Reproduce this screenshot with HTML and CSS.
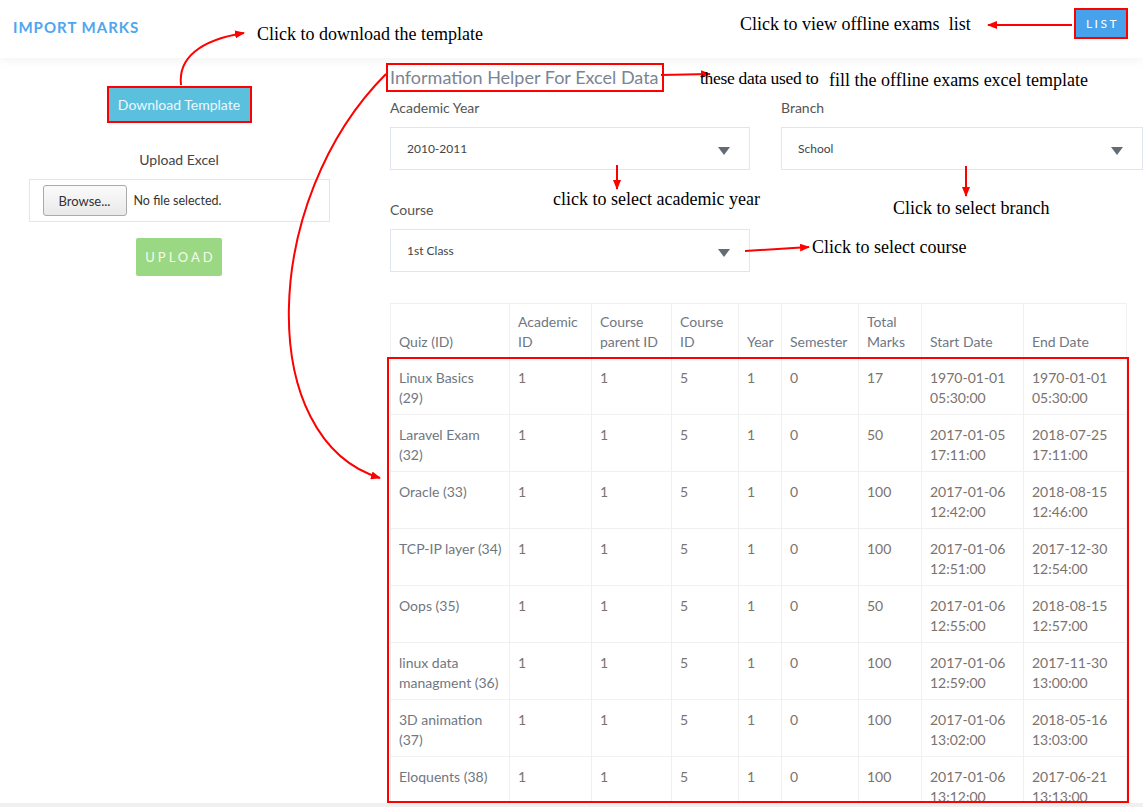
FILE: index.html
```html
<!DOCTYPE html>
<html lang="en">
<head>
<meta charset="utf-8">
<title>Import Marks</title>
<link rel="stylesheet" href="styles.css">
</head>
<body>
<div class="page">
  <header class="topbar">
    <div class="brand">IMPORT MARKS</div>
    <button class="btn-list">LIST</button>
  </header>
  <div class="main">
    <aside class="left">
      <button class="btn-download">Download Template</button>
      <div class="upload-label">Upload Excel</div>
      <div class="file-box">
        <span class="browse">Browse...</span>
        <span class="file-text">No file selected.</span>
      </div>
      <button class="btn-upload">UPLOAD</button>
    </aside>
    <section class="right">
      <div class="info-title">Information Helper For Excel Data</div>
      <div class="field-grid">
        <div class="field">
          <div class="field-label">Academic Year</div>
          <div class="select"><span>2010-2011</span><i class="caret"></i></div>
        </div>
        <div class="field">
          <div class="field-label">Branch</div>
          <div class="select"><span>School</span><i class="caret"></i></div>
        </div>
        <div class="field field-course">
          <div class="field-label">Course</div>
          <div class="select"><span>1st Class</span><i class="caret"></i></div>
        </div>
      </div>
      <table class="quiz-table">
        <colgroup>
          <col class="c1"><col class="c2"><col class="c3"><col class="c4"><col class="c5"><col class="c6"><col class="c7"><col class="c8"><col class="c9">
        </colgroup>
        <thead>
          <tr><th>Quiz (ID)</th><th>Academic ID</th><th>Course parent ID</th><th>Course ID</th><th>Year</th><th>Semester</th><th>Total Marks</th><th>Start Date</th><th>End Date</th></tr>
        </thead>
        <tbody>
          <tr><td class="name">Linux Basics<br>(29)</td><td>1</td><td>1</td><td>5</td><td>1</td><td>0</td><td>17</td><td>1970-01-01 05:30:00</td><td>1970-01-01 05:30:00</td></tr>
          <tr><td class="name">Laravel Exam (32)</td><td>1</td><td>1</td><td>5</td><td>1</td><td>0</td><td>50</td><td>2017-01-05 17:11:00</td><td>2018-07-25 17:11:00</td></tr>
          <tr><td class="name">Oracle (33)</td><td>1</td><td>1</td><td>5</td><td>1</td><td>0</td><td>100</td><td>2017-01-06 12:42:00</td><td>2018-08-15 12:46:00</td></tr>
          <tr><td class="name">TCP-IP layer (34)</td><td>1</td><td>1</td><td>5</td><td>1</td><td>0</td><td>100</td><td>2017-01-06 12:51:00</td><td>2017-12-30 12:54:00</td></tr>
          <tr><td class="name">Oops (35)</td><td>1</td><td>1</td><td>5</td><td>1</td><td>0</td><td>50</td><td>2017-01-06 12:55:00</td><td>2018-08-15 12:57:00</td></tr>
          <tr><td class="name">linux data managment (36)</td><td>1</td><td>1</td><td>5</td><td>1</td><td>0</td><td>100</td><td>2017-01-06 12:59:00</td><td>2017-11-30 13:00:00</td></tr>
          <tr><td class="name">3D animation (37)</td><td>1</td><td>1</td><td>5</td><td>1</td><td>0</td><td>100</td><td>2017-01-06 13:02:00</td><td>2018-05-16 13:03:00</td></tr>
          <tr><td class="name">Eloquents (38)</td><td>1</td><td>1</td><td>5</td><td>1</td><td>0</td><td>100</td><td>2017-01-06 13:12:00</td><td>2017-06-21 13:13:00</td></tr>
        </tbody>
      </table>
    </section>
  </div>

  <svg class="annotations" width="1143" height="807" viewBox="0 0 1143 807" xmlns="http://www.w3.org/2000/svg">
    <defs>
      <marker id="ah" markerWidth="10" markerHeight="8" refX="9" refY="4" orient="auto" markerUnits="userSpaceOnUse">
        <path d="M0,0 L10,4 L0,8 Z" fill="#ff0000"/>
      </marker>
    </defs>
    <g fill="none" stroke="#ff0000" stroke-width="2">
      <path d="M181,85 C178,58 200,40 244,33" marker-end="url(#ah)"/>
      <path d="M1072,25 L988,25" marker-end="url(#ah)"/>
      <path d="M661,75 L710,74" marker-end="url(#ah)"/>
      <path d="M617,165 L617,189" marker-end="url(#ah)"/>
      <path d="M966,166 L966,196" marker-end="url(#ah)"/>
      <path d="M745,251 L809,247" marker-end="url(#ah)"/>
      <path d="M386,74 C260,200 255,440 380,478" marker-end="url(#ah)"/>
      <rect x="388" y="358" width="740" height="444"/>
    </g>
    <g class="notes" fill="#000">
      <text x="257" y="40">Click to download the template</text>
      <text x="740" y="30">Click to view offline exams&#160;&#160;list</text>
      <text x="700" y="84" class="small">these data used to</text>
      <text x="829" y="86">fill the offline exams excel template</text>
      <text x="553" y="205">click to select academic year</text>
      <text x="893" y="214">Click to select branch</text>
      <text x="812" y="253">Click to select course</text>
    </g>
  </svg>
</div>
</body>
</html>
```

FILE: styles.css
```css
* { box-sizing: border-box; }

body {
  margin: 0;
  background: #f0f0f0;
  font-family: Lato, "Open Sans", "DejaVu Sans", sans-serif;
}

.page {
  position: relative;
  width: 1143px;
  height: 803px;
  overflow: hidden;
  background: #fff;
}

.topbar {
  height: 58px;
  display: flex;
  justify-content: space-between;
  align-items: flex-start;
  padding: 0 15px 0 13px;
  box-shadow: 0 3px 10px rgba(0, 0, 0, 0.05);
  position: relative;
}

.brand {
  margin-top: 18px;
  font-size: 15px;
  font-weight: 700;
  letter-spacing: 1px;
  color: #4da6ef;
}

.btn-list {
  margin-top: 8px;
  width: 54px;
  height: 31px;
  border: 2px solid #ff0000;
  background: #46a2ea;
  color: #fff;
  font-family: inherit;
  font-size: 12px;
  letter-spacing: 2.5px;
  padding: 0 0 0 3px;
}

.main {
  display: flex;
}

.left {
  width: 358px;
  display: flex;
  flex-direction: column;
  align-items: center;
  padding-top: 28px;
}

.btn-download {
  width: 145px;
  height: 37px;
  border: 2px solid #ff0000;
  background: #5bc0de;
  color: #eef8fc;
  font-family: inherit;
  font-size: 14px;
  padding: 0;
}

.upload-label {
  margin-top: 28px;
  font-size: 14px;
  line-height: 17px;
  color: #444;
}

.file-box {
  margin-top: 11px;
  width: 301px;
  height: 43px;
  border: 1px solid #dfe6ef;
  display: flex;
  align-items: center;
  padding: 0 13px;
  gap: 7px;
}

.browse {
  width: 84px;
  height: 31px;
  border: 1px solid #aaa;
  border-radius: 3px;
  background: linear-gradient(#fbfbfb, #e9e9e9);
  font-size: 13px;
  color: #333;
  display: flex;
  align-items: center;
  justify-content: center;
}

.file-text {
  font-size: 12.5px;
  color: #333;
}

.btn-upload {
  margin-top: 16px;
  width: 86px;
  height: 38px;
  border: none;
  border-radius: 2px;
  background: #9bd883;
  color: #f4fbee;
  font-family: inherit;
  font-size: 13px;
  letter-spacing: 3px;
  padding: 0 0 0 3px;
}

.right {
  margin-left: 32px;
  width: 753px;
  padding-top: 5px;
}

.info-title {
  display: inline-block;
  height: 29px;
  border: 2px solid #ff0000;
  padding: 0 3px 0 2px;
  font-size: 18px;
  line-height: 25px;
  color: #7b8592;
  margin-left: -4px;
}

.field-grid {
  margin-top: 7px;
  display: grid;
  grid-template-columns: 360px 362px;
  column-gap: 31px;
  row-gap: 31px;
}

.field-label {
  font-size: 14px;
  line-height: 17px;
  color: #555;
}

.select {
  margin-top: 11px;
  height: 43px;
  border: 1px solid #dfe6ef;
  display: flex;
  align-items: center;
  justify-content: space-between;
  padding: 0 19px 0 16px;
  font-size: 12px;
  color: #444;
}

.caret {
  width: 0;
  height: 0;
  border-left: 6px solid transparent;
  border-right: 6px solid transparent;
  border-top: 8px solid #656b76;
  margin-top: 4px;
}

.quiz-table {
  margin-top: 31px;
  width: 736px;
  table-layout: fixed;
  border-collapse: collapse;
  font-size: 14px;
  line-height: 20px;
  color: #6f7782;
}

.c1 { width: 119px; }
.c2 { width: 82px; }
.c3 { width: 80px; }
.c4 { width: 67px; }
.c5 { width: 43px; }
.c6 { width: 77px; }
.c7 { width: 63px; }
.c8 { width: 102px; }
.c9 { width: 103px; }

.quiz-table th,
.quiz-table td {
  border: 1px solid #f0f0f0;
  text-align: left;
  font-weight: 400;
}

.quiz-table th {
  vertical-align: bottom;
  padding: 7px 3px 5px 8px;
  height: 54px;
}

.quiz-table td {
  vertical-align: top;
  padding: 10px 3px 6px 8px;
  height: 57px;
  color: #7a736e;
}

.quiz-table td.name {
  color: #6f7782;
}

.annotations {
  position: absolute;
  left: 0;
  top: 0;
  pointer-events: none;
}

.notes text {
  font-family: "Liberation Serif", "Times New Roman", serif;
  font-size: 18px;
}

.notes text.small {
  font-size: 17.5px;
  letter-spacing: -0.3px;
}
```
